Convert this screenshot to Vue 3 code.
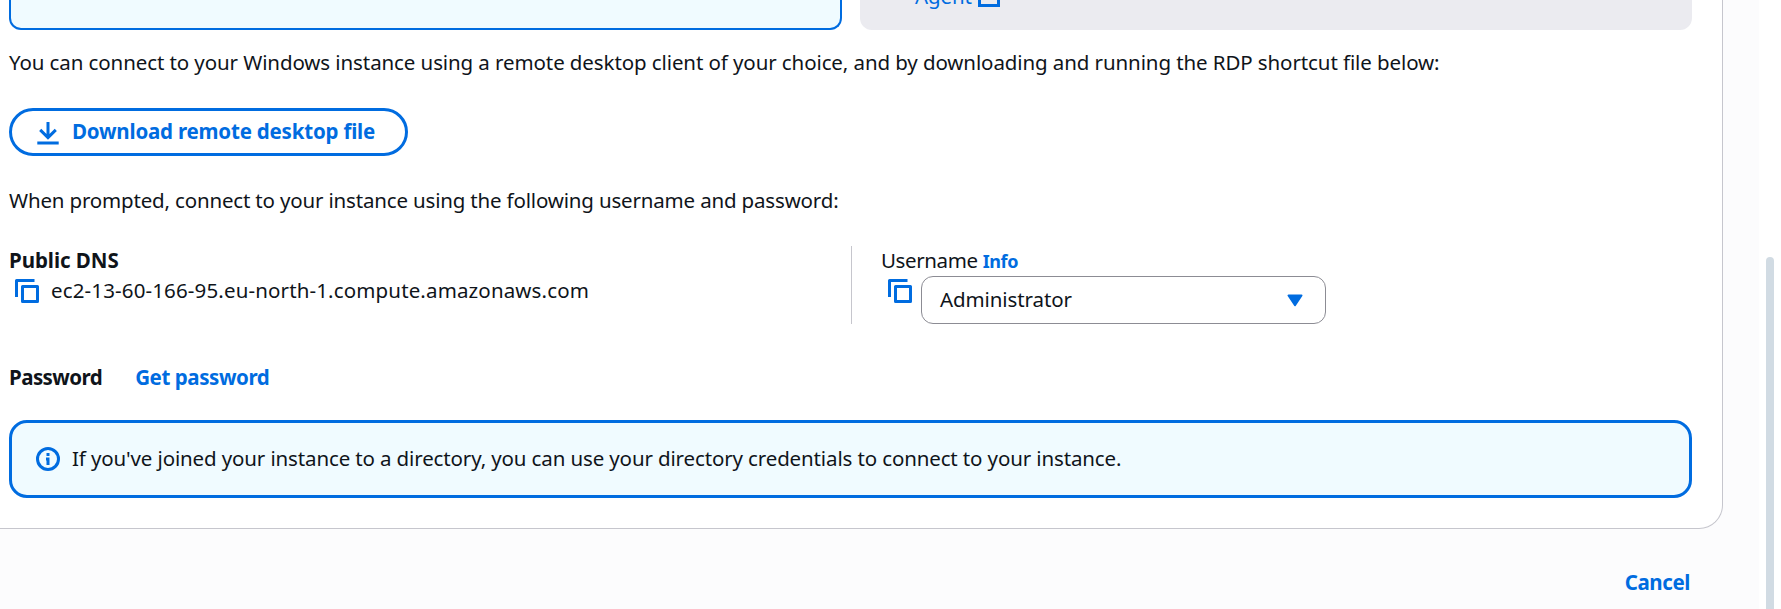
<script setup>
const dns = 'ec2-13-60-166-95.eu-north-1.compute.amazonaws.com'
const user = 'Administrator'
</script>

<template>
  <div class="page">
    <main class="content">
      <section class="card">
        <div class="tiles">
          <div class="tile selected"></div>
          <div class="tile disabled">
            <a class="agent">Agent</a>
            <svg class="external" width="22" height="22" viewBox="0 0 22 22">
              <path d="M9 2H1.5V20.5H20.5V13M13 1.5H20.5V9M20.5 1.5L10 12" />
            </svg>
          </div>
        </div>

        <p class="intro">You can connect to your Windows instance using a remote desktop client of your choice, and by downloading and running the RDP shortcut file below:</p>

        <button class="download" type="button">
          <svg width="22" height="24" viewBox="0 0 22 24">
            <path d="M11 1V16.2M3.2 8.9L11 16.6L18.8 8.9M0.3 22H21.7" />
          </svg>
          <span>Download remote desktop file</span>
        </button>

        <p class="prompt">When prompted, connect to your instance using the following username and password:</p>

        <div class="columns">
          <div class="dns">
            <div class="label dns-label">Public DNS</div>
            <div class="value">
              <svg class="copy" width="24" height="24" viewBox="0 0 24 24">
                <path d="M1.5 18V1.5H19.5" /><path d="M7.5 7.5H22.5V22.5H7.5Z" />
              </svg>
              <span class="host">{{ dns }}</span>
            </div>
          </div>
          <div class="username">
            <div class="user-label"><span>Username</span><a class="info">Info</a></div>
            <div class="value">
              <svg class="copy" width="24" height="24" viewBox="0 0 24 24">
                <path d="M1.5 18V1.5H19.5" /><path d="M7.5 7.5H22.5V22.5H7.5Z" />
              </svg>
              <div class="select">
                <span>{{ user }}</span>
                <svg width="16" height="13" viewBox="0 0 16 13">
                  <path d="M1.5 1.5H14.5L8 11.2Z" />
                </svg>
              </div>
            </div>
          </div>
        </div>

        <div class="password">
          <span class="label password-label">Password</span>
          <a class="get">Get password</a>
        </div>

        <div class="alert">
          <svg width="24" height="24" viewBox="0 0 24 24">
            <circle cx="12" cy="12" r="10.5" />
            <path d="M12 6V9M12 10.5V18M10 12H12" />
          </svg>
          <span>If you've joined your instance to a directory, you can use your directory credentials to connect to your instance.</span>
        </div>
      </section>
      <footer class="actions"><a class="cancel">Cancel</a></footer>
    </main>
    <aside class="scroll"><div class="thumb"></div></aside>
  </div>
</template>

<style>
body { background: #fff; overflow: hidden; }
</style>

<style scoped>
* { box-sizing: border-box; }
.page {
  display: flex;
  width: 1781px;
  height: 609px;
  overflow: hidden;
  color: #0f141a;
  font-family: "Noto Sans", "Open Sans", sans-serif;
  font-size: 20.5px;
  line-height: 30px;
  white-space: nowrap;
}
.content { width: 1759px; background: #fcfcfd; }
.card {
  width: 1723px;
  height: 529px;
  padding: 0 30px 0 9px;
  background: #fff;
  border: solid #c6c6cd;
  border-width: 0 1px 1px 0;
  border-bottom-right-radius: 24px;
}
p { margin: 0; }
svg { display: block; flex: none; fill: none; stroke: #006ce0; stroke-width: 3; }
a { color: #006ce0; }
.label, .get, .info, .cancel { font-weight: 700; }

.tiles { display: grid; grid-template-columns: 833px 832px; gap: 18px; height: 30px; }
.tile { border-radius: 0 0 12px 12px; }
.selected { background: #f0fbff; border: 2px solid #006ce0; border-top: 0; }
.disabled { display: flex; gap: 6px; padding-left: 55px; background: #ebebf0; }
.agent { margin-top: -19px; letter-spacing: -0.1px; }
.external { margin-top: -15px; }

.intro { margin-top: 17px; letter-spacing: -0.095px; }
.download {
  display: flex;
  align-items: center;
  gap: 13px;
  width: 399px;
  height: 48px;
  margin-top: 31px;
  padding: 0 0 0 25px;
  background: #fff;
  border: 3px solid #006ce0;
  border-radius: 24px;
  color: #006ce0;
  font: inherit;
  font-weight: 700;
  letter-spacing: -0.2px;
}
.download svg { margin-top: 1px; }
.download span { padding-bottom: 2px; }
.prompt { margin-top: 29px; letter-spacing: -0.17px; }

.columns { display: grid; grid-template-columns: 842px 1fr; height: 78px; margin-top: 31px; }
.dns-label, .user-label { height: 30px; line-height: 28px; }
.dns-label { letter-spacing: -0.05px; }
.username { padding-left: 30px; border-left: 1px solid #c6c6cd; }
.value { display: flex; align-items: flex-start; }
.copy { margin: 3px 12px 0 6px; stroke-linejoin: round; }
.host { line-height: 28px; letter-spacing: 0.14px; }
.user-label { display: flex; gap: 5px; margin-left: -1px; letter-spacing: -0.38px; }
.info { padding-top: 1px; font-size: 18px; letter-spacing: -0.4px; }
.username .copy { margin-right: 9px; }
.select {
  display: flex;
  align-items: center;
  justify-content: space-between;
  width: 405px;
  height: 48px;
  padding: 0 22px 0 18px;
  border: 1px solid #8c8c94;
  border-radius: 12px;
  letter-spacing: -0.1px;
}
.select span { padding-bottom: 2px; }
.select svg { fill: #006ce0; stroke-width: 2; stroke-linejoin: round; }

.password { display: flex; gap: 33px; margin-top: 38px; }
.password-label { letter-spacing: -0.56px; }
.get { letter-spacing: -0.42px; }

.alert {
  display: flex;
  align-items: center;
  gap: 12px;
  width: 1683px;
  height: 78px;
  margin-top: 28px;
  padding-left: 24px;
  background: #f0fbff;
  border: 3px solid #006ce0;
  border-radius: 18px;
  letter-spacing: -0.13px;
}
.alert span { padding-bottom: 2px; }
.actions { display: flex; justify-content: flex-end; padding: 38px 69px 0 0; }
.cancel { letter-spacing: -0.4px; }

.scroll { width: 22px; padding: 257px 0 0 7px; background: #fff; }
.thumb { width: 8px; height: 400px; border-radius: 4px; background: #d1dbe3; }
</style>
